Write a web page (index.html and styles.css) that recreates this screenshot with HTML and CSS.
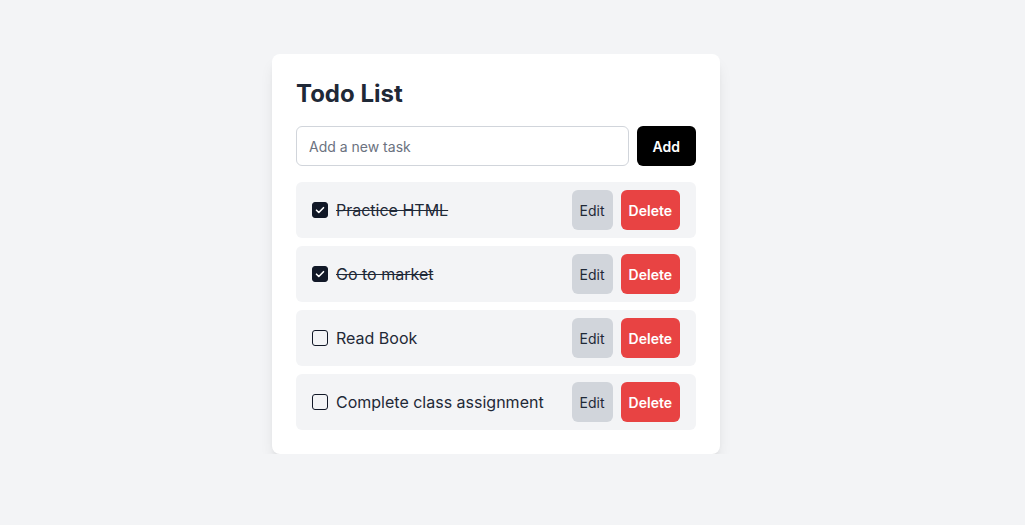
FILE: index.html
```html
<!DOCTYPE html>
<html lang="en">
<head>
<meta charset="utf-8">
<title>Todo List</title>
<link rel="stylesheet" href="styles.css">
</head>
<body>
<div class="page">
  <div class="card">
    <h1 class="title">Todo List</h1>
    <div class="add-row">
      <input class="task-input" type="text" placeholder="Add a new task">
      <button class="btn btn-add">Add</button>
    </div>
    <ul class="list">
      <li class="item">
        <span class="check checked"><svg viewBox="0 0 16 16" width="16" height="16"><path d="M4.5 8.2l2.3 2.3 4.7-4.8" fill="none" stroke="#fff" stroke-width="1.6" stroke-linecap="round" stroke-linejoin="round"/></svg></span>
        <span class="label done">Practice HTML</span>
        <button class="btn btn-edit">Edit</button>
        <button class="btn btn-delete">Delete</button>
      </li>
      <li class="item">
        <span class="check checked"><svg viewBox="0 0 16 16" width="16" height="16"><path d="M4.5 8.2l2.3 2.3 4.7-4.8" fill="none" stroke="#fff" stroke-width="1.6" stroke-linecap="round" stroke-linejoin="round"/></svg></span>
        <span class="label done">Go to market</span>
        <button class="btn btn-edit">Edit</button>
        <button class="btn btn-delete">Delete</button>
      </li>
      <li class="item">
        <span class="check"></span>
        <span class="label">Read Book</span>
        <button class="btn btn-edit">Edit</button>
        <button class="btn btn-delete">Delete</button>
      </li>
      <li class="item">
        <span class="check"></span>
        <span class="label">Complete class assignment</span>
        <button class="btn btn-edit">Edit</button>
        <button class="btn btn-delete">Delete</button>
      </li>
    </ul>
  </div>
</div>
</body>
</html>
```

FILE: styles.css
```css
* { box-sizing: border-box; }
html, body { margin: 0; padding: 0; }
body {
  background: #f3f4f6;
  font-family: Inter, "Noto Sans", sans-serif;
  color: #1f2937;
}
.page {
  display: flex;
  padding: 54px 0 0 272px;
}
.card {
  width: 448px;
  background: #fff;
  border-radius: 8px;
  padding: 24px;
  box-shadow: 0 10px 15px -3px rgba(0,0,0,0.1), 0 4px 6px -4px rgba(0,0,0,0.1);
}
.title {
  margin: 0 0 16px;
  font-size: 24px;
  line-height: 32px;
  font-weight: 700;
  color: #1f2937;
}
.add-row {
  display: flex;
  gap: 8px;
  margin-bottom: 16px;
}
.task-input {
  flex: 1;
  height: 40px;
  border: 1px solid #d1d5db;
  border-radius: 6px;
  padding: 0 12px;
  font-family: inherit;
  font-size: 14px;
  color: #1f2937;
  outline: none;
}
.task-input::placeholder { color: #6b7280; }
.btn {
  height: 40px;
  border: none;
  border-radius: 6px;
  font-family: inherit;
  font-size: 14px;
  cursor: pointer;
  padding: 0 8px;
}
.btn-add {
  background: #000;
  color: #fff;
  font-weight: 600;
  padding: 0 16px;
}
.list {
  list-style: none;
  margin: 0;
  padding: 0;
  display: flex;
  flex-direction: column;
  gap: 8px;
}
.item {
  display: flex;
  align-items: center;
  background: #f3f4f6;
  border-radius: 6px;
  padding: 8px 16px;
  height: 56px;
  gap: 8px;
}
.check {
  width: 16px;
  height: 16px;
  border: 1.5px solid #111827;
  border-radius: 3px;
  display: flex;
  align-items: center;
  justify-content: center;
  flex-shrink: 0;
}
.check svg { display: block; width: 16px; height: 16px; flex-shrink: 0; }
.check.checked { background: #111827; }
.label {
  flex: 1;
  font-size: 16px;
  line-height: 24px;
  color: #1f2937;
}
.label.done { text-decoration: line-through; }
.btn-edit {
  background: #d1d5db;
  color: #1f2937;
  font-weight: 400;
}
.btn-delete {
  background: #e84343;
  color: #fff;
  font-weight: 600;
}
```
